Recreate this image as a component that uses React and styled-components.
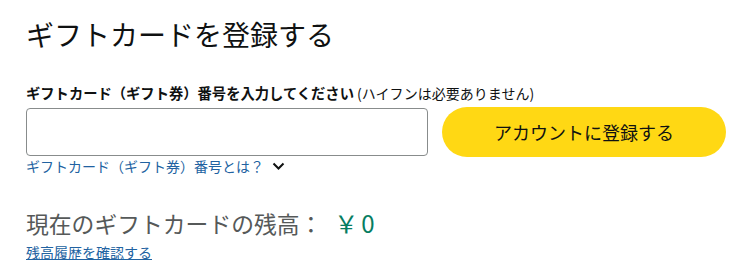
import React from "react";
import styled, { createGlobalStyle } from "styled-components";

const Global = createGlobalStyle`
  html, body { margin: 0; padding: 0; background: #fff; }
  body { font-family: "Noto Sans CJK JP", "Noto Sans", sans-serif; color: #0f1111; }
`;

const Page = styled.div`
  display: flex;
  flex-direction: column;
  padding: 17px 24px 0 26px;
`;

const Title = styled.h1`
  margin: 0;
  font-size: 28px;
  line-height: 34px;
  font-weight: 400;
  color: #0f1111;
`;

const Label = styled.div`
  margin-top: 32px;
  font-size: 14.3px;
  line-height: 20px;
  color: #0f1111;
`;

const Strong = styled.span`
  font-weight: 700;
`;

const Note = styled.span`
  font-weight: 400;
  font-size: 14px;
`;

const Row = styled.div`
  margin-top: 4px;
  display: flex;
  align-items: center;
  gap: 14px;
  height: 50px;
`;

const Input = styled.input`
  box-sizing: border-box;
  width: 402px;
  height: 48px;
  border: 1px solid #888c8c;
  border-radius: 4px;
  padding: 0 10px;
  font-size: 16px;
  font-family: inherit;
  outline: none;
`;

const Button = styled.button`
  box-sizing: border-box;
  width: 284px;
  height: 50px;
  border: none;
  border-radius: 25px;
  background: #ffd814;
  color: #0f1111;
  font-family: inherit;
  font-size: 18px;
  cursor: pointer;
`;

const Link = styled.a`
  color: #2162a1;
  font-size: 14px;
  line-height: 18px;
  text-decoration: ${(p) => (p.$underline ? "underline" : "none")};
  cursor: pointer;
`;

const Expander = styled.div`
  display: flex;
  align-items: center;
  gap: 8px;
  height: 18px;
`;

const Balance = styled.div`
  margin-top: 33px;
  font-size: 22.8px;
  line-height: 30px;
  color: #565959;
`;

const Amount = styled.span`
  color: #067d62;
  font-size: 24px;
  margin-left: 12px;
  letter-spacing: 3px;
`;

const History = styled.div`
  margin-top: 3px;
  line-height: 18px;
`;

const Chevron = () => (
  <svg width="13" height="9" viewBox="0 0 13 9" aria-hidden="true">
    <path d="M1.5 1.5 L6.5 6.5 L11.5 1.5" fill="none" stroke="#0f1111" strokeWidth="2" />
  </svg>
);

export default function App() {
  return (
    <>
      <Global />
      <Page>
        <Title>ギフトカードを登録する</Title>
        <Label>
          <Strong>ギフトカード（ギフト券）番号を入力してください</Strong>
          <Note> (ハイフンは必要ありません)</Note>
        </Label>
        <Row>
          <Input type="text" />
          <Button>アカウントに登録する</Button>
        </Row>
        <Expander>
          <Link>ギフトカード（ギフト券）番号とは？</Link>
          <Chevron />
        </Expander>
        <Balance>
          現在のギフトカードの残高：<Amount>￥0</Amount>
        </Balance>
        <History>
          <Link $underline>残高履歴を確認する</Link>
        </History>
      </Page>
    </>
  );
}
